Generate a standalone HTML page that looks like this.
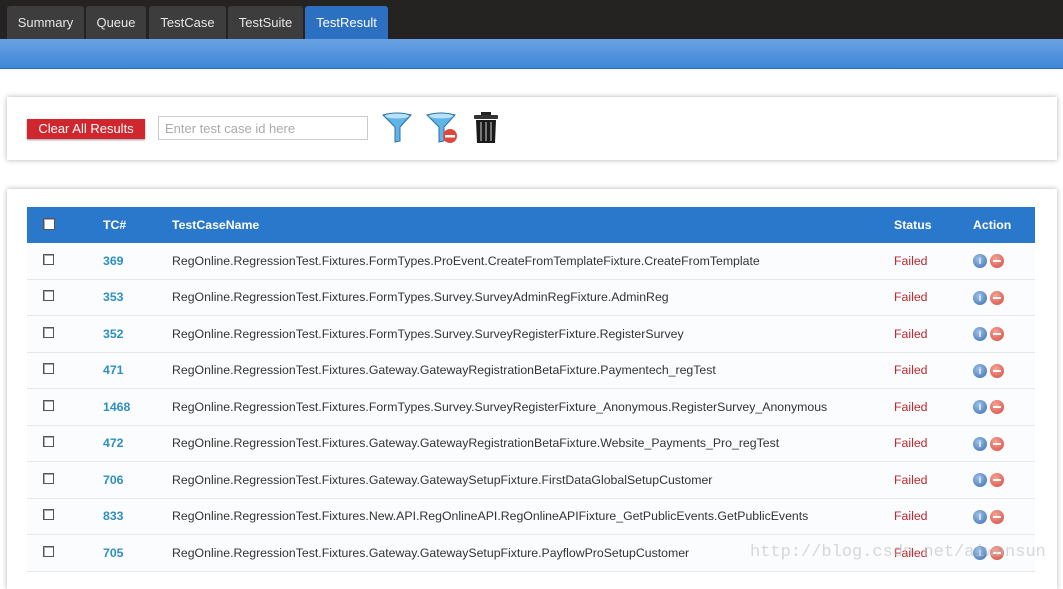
<!DOCTYPE html>
<html><head><style>
body{margin:0;width:1063px;height:574px;overflow:hidden;background:#fff;font-family:"Liberation Sans",Arial,sans-serif;position:relative}
.top{position:absolute;left:0;top:0;width:1063px;height:39px;background:#252321}
.tab{position:absolute;top:6px;height:33px;background:#3d3d3d;color:#e6e6e6;font-size:13px;line-height:33px;text-align:center;border-radius:3px 3px 0 0}
.tab.act{background:#2c71c1;color:#fff}
.band{position:absolute;left:0;top:39px;width:1063px;height:29px;background:linear-gradient(#6aa3e4,#3f86d8);border-bottom:1px solid #2e6fb8}
.panel{position:absolute;left:7px;width:1050px;background:#fff;box-shadow:0 0 5px rgba(0,0,0,.3)}
.btn{position:absolute;left:27px;top:119px;width:118px;height:20px;background:#d0262d;color:#fff;font-size:13px;line-height:20px;text-align:center;box-shadow:0 1px 2px rgba(0,0,0,.4)}
.inp{position:absolute;left:158px;top:116px;height:24px;border:1px solid #ccc;color:#aaa;font-size:13px;line-height:24px;padding-left:6px;box-sizing:border-box;width:210px}
table{position:absolute;left:27px;top:207px;width:1008px;border-collapse:collapse;font-size:12.3px;table-layout:fixed}
th{background:#2a78cc;color:#fff;height:36px;padding:0;text-align:left;font-weight:bold}
td{height:35.5px;padding:0;border-bottom:1px solid #e5e9ec;color:#333;background:#fafcfd;white-space:nowrap}
.cb{display:inline-block;width:9px;height:9px;border:1px solid #555;background:#fff;box-shadow:inset 1px 1px 0 #aaa}
.id{color:#2f8fc0;font-weight:bold}
.f{color:#c0272d}
.ic{display:inline-block;width:14px;height:14px;border-radius:50%;vertical-align:middle;margin-right:3px;position:relative}
.i{background:radial-gradient(circle at 40% 35%,#9cc0ea,#3b6db0)}
.i:after{content:"i";position:absolute;left:0;right:0;top:0;text-align:center;color:#fff;font-size:9px;line-height:14px;font-weight:bold}
.m{background:radial-gradient(circle at 40% 35%,#f6a59a,#d6463a)}
.m:after{content:"";position:absolute;left:3px;top:6px;width:8px;height:2px;background:#fff}
</style></head><body>
<div class="top"></div>
<div class="tab" style="left:7px;width:77px">Summary</div>
<div class="tab" style="left:86px;width:60px">Queue</div>
<div class="tab" style="left:149px;width:77px">TestCase</div>
<div class="tab" style="left:228px;width:75px">TestSuite</div>
<div class="tab act" style="left:305px;width:83px">TestResult</div>
<div class="band"></div>
<div class="panel" style="top:97px;height:63px"></div>
<div class="btn">Clear All Results</div>
<div class="inp">Enter test case id here</div>
<svg style="position:absolute;left:382px;top:112px" width="30" height="32" viewBox="0 0 30 32"><path d="M1 3 Q15 -1 29 3 L18 15 L18 29 L13 30 L13 15 Z" fill="#5fb4e8" stroke="#2c6fa8"/><ellipse cx="15" cy="4" rx="12" ry="2.5" fill="#b8e2f8"/></svg>
<svg style="position:absolute;left:426px;top:112px" width="32" height="32" viewBox="0 0 32 32"><path d="M1 3 Q15 -1 29 3 L18 15 L18 29 L13 30 L13 15 Z" fill="#5fb4e8" stroke="#2c6fa8"/><ellipse cx="15" cy="4" rx="12" ry="2.5" fill="#b8e2f8"/><circle cx="24" cy="24" r="7" fill="#e0473c"/><rect x="19" y="23" width="10" height="2.5" fill="#fff"/></svg>
<svg style="position:absolute;left:472px;top:111px" width="28" height="34" viewBox="0 0 28 34"><rect x="9" y="1" width="10" height="3" fill="#222"/><rect x="2" y="4" width="24" height="4" rx="1" fill="#333"/><path d="M4 9 H24 L23 32 H5 Z" fill="#1a1a1a"/><rect x="8" y="11" width="2" height="19" fill="#777"/><rect x="13" y="11" width="2" height="19" fill="#777"/><rect x="18" y="11" width="2" height="19" fill="#777"/></svg>
<div class="panel" style="top:189px;height:400px"></div>
<table>
<colgroup><col style="width:76px"><col style="width:69px"><col style="width:722px"><col style="width:79px"><col style="width:62px"></colgroup>
<tr><th style="padding-left:16px"><span class="cb" style="width:10px;height:10px"></span></th><th>TC#</th><th>TestCaseName</th><th>Status</th><th>Action</th></tr>
<tr><td style="padding-left:16px"><span class="cb"></span></td><td class="id">369</td><td>RegOnline.RegressionTest.Fixtures.FormTypes.ProEvent.CreateFromTemplateFixture.CreateFromTemplate</td><td class="f">Failed</td><td><span class="ic i"></span><span class="ic m"></span></td></tr>
<tr><td style="padding-left:16px"><span class="cb"></span></td><td class="id">353</td><td>RegOnline.RegressionTest.Fixtures.FormTypes.Survey.SurveyAdminRegFixture.AdminReg</td><td class="f">Failed</td><td><span class="ic i"></span><span class="ic m"></span></td></tr>
<tr><td style="padding-left:16px"><span class="cb"></span></td><td class="id">352</td><td>RegOnline.RegressionTest.Fixtures.FormTypes.Survey.SurveyRegisterFixture.RegisterSurvey</td><td class="f">Failed</td><td><span class="ic i"></span><span class="ic m"></span></td></tr>
<tr><td style="padding-left:16px"><span class="cb"></span></td><td class="id">471</td><td>RegOnline.RegressionTest.Fixtures.Gateway.GatewayRegistrationBetaFixture.Paymentech_regTest</td><td class="f">Failed</td><td><span class="ic i"></span><span class="ic m"></span></td></tr>
<tr><td style="padding-left:16px"><span class="cb"></span></td><td class="id">1468</td><td>RegOnline.RegressionTest.Fixtures.FormTypes.Survey.SurveyRegisterFixture_Anonymous.RegisterSurvey_Anonymous</td><td class="f">Failed</td><td><span class="ic i"></span><span class="ic m"></span></td></tr>
<tr><td style="padding-left:16px"><span class="cb"></span></td><td class="id">472</td><td>RegOnline.RegressionTest.Fixtures.Gateway.GatewayRegistrationBetaFixture.Website_Payments_Pro_regTest</td><td class="f">Failed</td><td><span class="ic i"></span><span class="ic m"></span></td></tr>
<tr><td style="padding-left:16px"><span class="cb"></span></td><td class="id">706</td><td>RegOnline.RegressionTest.Fixtures.Gateway.GatewaySetupFixture.FirstDataGlobalSetupCustomer</td><td class="f">Failed</td><td><span class="ic i"></span><span class="ic m"></span></td></tr>
<tr><td style="padding-left:16px"><span class="cb"></span></td><td class="id">833</td><td>RegOnline.RegressionTest.Fixtures.New.API.RegOnlineAPI.RegOnlineAPIFixture_GetPublicEvents.GetPublicEvents</td><td class="f">Failed</td><td><span class="ic i"></span><span class="ic m"></span></td></tr>
<tr><td style="padding-left:16px"><span class="cb"></span></td><td class="id">705</td><td>RegOnline.RegressionTest.Fixtures.Gateway.GatewaySetupFixture.PayflowProSetupCustomer</td><td class="f">Failed</td><td><span class="ic i"></span><span class="ic m"></span></td></tr>
</table>
<div style="position:absolute;left:750px;top:543px;font-family:'Liberation Mono',monospace;font-size:17px;color:rgba(190,190,190,.6)">http://blog.csdn.net/aiwansun</div>
</body></html>
